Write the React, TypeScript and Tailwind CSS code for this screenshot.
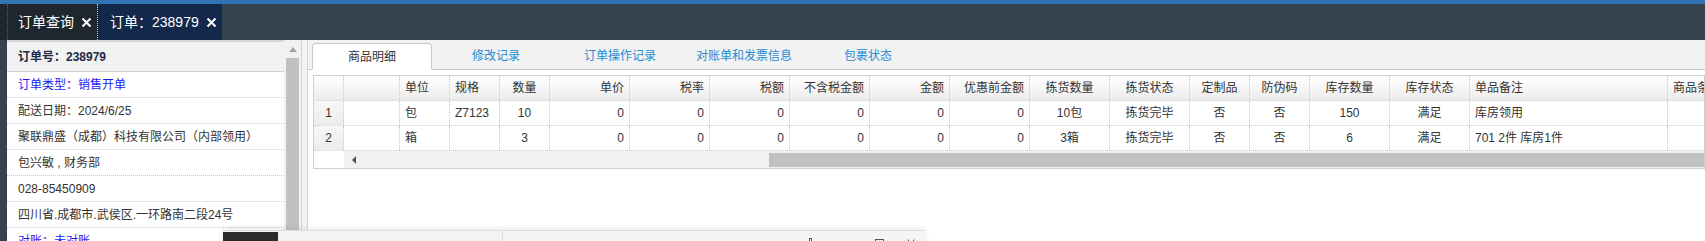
const font = { fontFamily: '"Liberation Sans", "Noto Sans CJK SC", sans-serif' }

type Col = { title: string; w: string; align: 'l' | 'c' | 'r' }

const cols: Col[] = [
  { title: '', w: 'w-[56px]', align: 'l' },
  { title: '单位', w: 'w-[50px]', align: 'l' },
  { title: '规格', w: 'w-[50px]', align: 'l' },
  { title: '数量', w: 'w-[50px]', align: 'c' },
  { title: '单价', w: 'w-[80px]', align: 'r' },
  { title: '税率', w: 'w-[80px]', align: 'r' },
  { title: '税额', w: 'w-[80px]', align: 'r' },
  { title: '不含税金额', w: 'w-[80px]', align: 'r' },
  { title: '金额', w: 'w-[80px]', align: 'r' },
  { title: '优惠前金额', w: 'w-[80px]', align: 'r' },
  { title: '拣货数量', w: 'w-[80px]', align: 'c' },
  { title: '拣货状态', w: 'w-[80px]', align: 'c' },
  { title: '定制品', w: 'w-[60px]', align: 'c' },
  { title: '防伪码', w: 'w-[60px]', align: 'c' },
  { title: '库存数量', w: 'w-[80px]', align: 'c' },
  { title: '库存状态', w: 'w-[80px]', align: 'c' },
  { title: '单品备注', w: 'w-[198px]', align: 'l' },
  { title: '商品条码', w: 'w-[100px]', align: 'l' },
]

const rows = [
  ['', '包', 'Z7123', '10', '0', '0', '0', '0', '0', '0', '10包', '拣货完毕', '否', '否', '150', '满足', '库房领用', ''],
  ['', '箱', '', '3', '0', '0', '0', '0', '0', '0', '3箱', '拣货完毕', '否', '否', '6', '满足', '701 2件 库房1件', ''],
]

const alignClass = {
  l: 'justify-start pl-[5px]',
  c: 'justify-center',
  r: 'justify-end pr-[5px]',
}

const infoRows = [
  { text: '订单类型：销售开单', blue: true },
  { text: '配送日期：2024/6/25' },
  { text: '聚联鼎盛（成都）科技有限公司（内部领用）' },
  { text: '包兴敏 , 财务部' },
  { text: '028-85450909' },
  { text: '四川省.成都市.武侯区.一环路南二段24号' },
  { text: '对账：未对账', blue: true },
]

const CloseX = () => (
  <svg width="11" height="11" viewBox="0 0 11 11" className="ml-[7px]">
    <path d="M1.5 1.5 L9.5 9.5 M9.5 1.5 L1.5 9.5" stroke="#fff" strokeWidth="2" />
  </svg>
)

const App = () => {
  return (
    <div className="relative w-[1705px] h-[241px] overflow-hidden bg-white text-[#333]" style={font}>
      {/* top strip */}
      <div className="h-[4px] bg-[#3174b3]" />

      {/* tab bar */}
      <div className="h-[36px] bg-[#36424f] flex">
        <div className="w-[98px] bg-[#1f262d] flex pl-[7px]">
          <div className="flex-1 flex items-center pl-[10px] border-l border-dotted border-[#5b646e] border-r border-r-[#c9ced4] text-white text-[14px]">
            订单查询
            <CloseX />
          </div>
        </div>
        <div className="w-[124px] bg-[#13294b] flex items-center pl-[12px] text-white text-[14px]">
          订单：238979
          <CloseX />
        </div>
      </div>

      <div className="flex h-[201px]">
        {/* sidebar edge */}
        <div className="w-[7px] bg-[#36424f]" />

        {/* left info panel */}
        <div className="w-[277px] border-t-2 border-[#d6d6d6] text-[12px]">
          <div className="h-[30px] bg-[#f2f2f2] border-b border-[#cfcfcf] flex items-center pl-[11px] font-bold text-[#1f2a44]">
            订单号：238979
          </div>
          {infoRows.map((r, i) => (
            <div
              key={i}
              className={`h-[26px] border-b border-dotted border-[#c8c8c8] flex items-center pl-[11px] whitespace-nowrap ${
                r.blue ? 'text-[#1a1af2]' : 'text-[#333]'
              }`}
            >
              {r.text}
            </div>
          ))}
        </div>

        {/* left scrollbar */}
        <div className="w-[17px] bg-[#f1f1f1] flex flex-col items-center">
          <div className="h-[18px] flex items-center justify-center">
            <svg width="8" height="5" viewBox="0 0 8 5">
              <path d="M0 5 L4 0 L8 5 Z" fill="#a3a3a3" />
            </svg>
          </div>
          <div className="w-[13px] flex-1 bg-[#c1c1c1]" />
        </div>

        {/* splitter */}
        <div className="w-[7px] bg-[#f3f3f3] border-l border-r border-[#d5d5d5]" />

        {/* right content */}
        <div className="flex-1 min-w-0 flex flex-col">
          <div className="h-[30px] bg-[#f2f2f2] border-b border-[#cccccc] flex items-end pl-[4px] text-[12px]">
            <div className="w-[120px] h-[27px] -mb-px bg-white border border-[#c8c8c8] border-b-white rounded-t-[4px] flex items-center justify-center text-[#333]">
              商品明细
            </div>
            {['修改记录', '订单操作记录', '对账单和发票信息', '包裹状态'].map((t) => (
              <div key={t} className="w-[120px] ml-[4px] h-[27px] flex items-center justify-center text-[#1e8ad3]">
                {t}
              </div>
            ))}
          </div>

          <div className="mt-[5px] ml-[5px] border border-[#cfcfcf] overflow-hidden text-[12px]">
            {/* header */}
            <div className="flex h-[25px] border-b border-[#e0e0e0] bg-linear-to-b from-white to-[#ececec] whitespace-nowrap">
              <div className="w-[30px] shrink-0 border-r border-dotted border-[#c8c8c8]" />
              {cols.map((c, i) => (
                <div
                  key={i}
                  className={`${c.w} shrink-0 flex items-center border-r border-dotted border-[#c8c8c8] ${alignClass[c.align]}`}
                >
                  {c.title}
                </div>
              ))}
            </div>

            {/* body */}
            {rows.map((r, ri) => (
              <div key={ri} className="flex h-[25px] border-b border-dotted border-[#c8c8c8] whitespace-nowrap">
                <div className="w-[30px] shrink-0 flex items-center justify-center bg-linear-to-b from-[#f8f8f8] to-[#ececec] border-r border-dotted border-[#c8c8c8]">
                  {ri + 1}
                </div>
                {cols.map((c, i) => (
                  <div
                    key={i}
                    className={`${c.w} shrink-0 flex items-center border-r border-dotted border-[#c8c8c8] ${alignClass[c.align]}`}
                  >
                    {r[i]}
                  </div>
                ))}
              </div>
            ))}

            {/* horizontal scrollbar */}
            <div className="flex h-[17px]">
              <div className="w-[30px] shrink-0 bg-white" />
              <div className="flex-1 bg-[#f1f1f1] flex items-start pt-[2px]">
                <div className="w-[20px] h-[14px] flex items-center justify-center">
                  <svg width="4" height="8" viewBox="0 0 4 8">
                    <path d="M4 0 L0 4 L4 8 Z" fill="#505050" />
                  </svg>
                </div>
                <div className="ml-[405px] flex-1 h-[14px] bg-[#c1c1c1]" />
              </div>
            </div>
          </div>
        </div>
      </div>

      {/* floating window peeking in at the bottom */}
      <div className="absolute left-[223px] top-[230px] w-[702px] h-[30px] bg-[#f5f5f5] border-t border-[#dcdcdc] shadow-[0_-2px_6px_rgba(0,0,0,0.08)] flex">
        <div className="w-[55px] mt-px bg-[#2b2b2b]" />
        <div className="w-[225px] bg-[#f3f3f3] border-r border-[#dddddd]" />
        <div className="flex-1 relative">
          <div className="absolute left-[306px] top-[7px] w-[3px] h-[6px] border border-[#555]" />
          <div className="absolute left-[372px] top-[8px] w-[9px] h-[9px] border border-[#555]" />
          <svg className="absolute left-[404px] top-[8px]" width="8" height="8" viewBox="0 0 8 8">
            <path d="M0.5 0.5 L7.5 7.5 M7.5 0.5 L0.5 7.5" stroke="#555" strokeWidth="1" />
          </svg>
        </div>
      </div>
    </div>
  )
}

export default App
